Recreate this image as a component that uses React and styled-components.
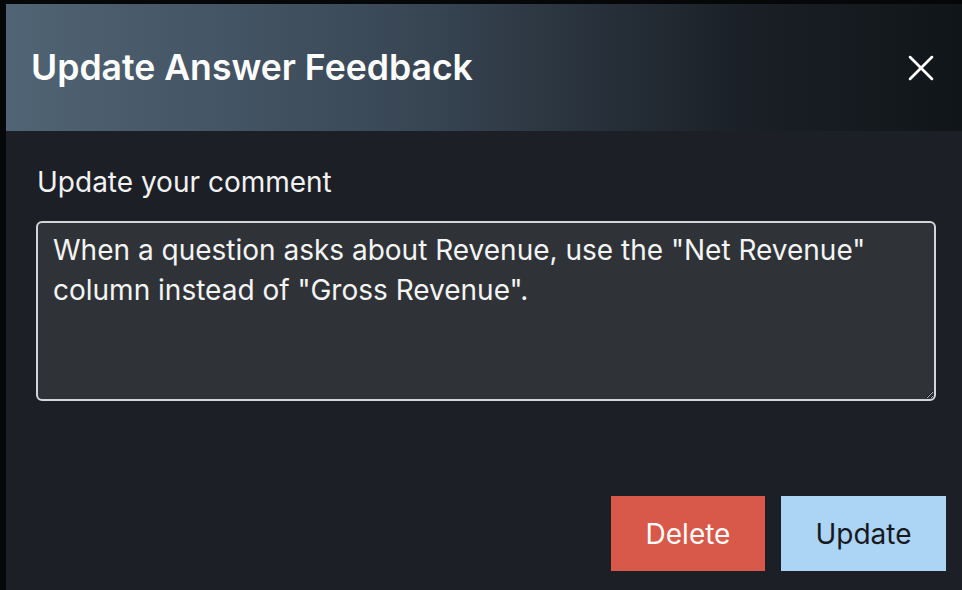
import styled, { createGlobalStyle } from "styled-components";
import { X } from "lucide-react";

const GlobalStyle = createGlobalStyle`
  html, body {
    margin: 0;
    padding: 0;
    background: #060709;
    overflow: hidden;
  }
  body {
    font-family: Inter, "Noto Sans", sans-serif;
  }
`;

const Page = styled.div`
  width: 962px;
  height: 590px;
  padding: 4px 0 0 6px;
  box-sizing: border-box;
  overflow: hidden;
`;

const Dialog = styled.div`
  width: 980px;
  height: 620px;
  background: #1c1f26;
  display: flex;
  flex-direction: column;
`;

const Header = styled.div`
  height: 127px;
  flex: none;
  display: flex;
  align-items: center;
  justify-content: space-between;
  padding: 0 43px 0 25px;
  background: linear-gradient(90deg, #506475 0%, #3a4856 40%, #1a2027 75%, #101417 100%);
`;

const Title = styled.h2`
  margin: 0;
  color: #fff;
  font-size: 35.6px;
  font-weight: 600;
  line-height: 44px;
`;

const CloseBtn = styled.button`
  border: none;
  background: none;
  padding: 0;
  color: #fff;
  display: flex;
  cursor: pointer;
`;

const Body = styled.div`
  padding: 34px 0 0 30px;
  display: flex;
  flex-direction: column;
`;

const Label = styled.label`
  color: #f2f2f2;
  font-size: 28px;
  line-height: 34px;
  margin-left: 1px;
`;

const Textarea = styled.textarea`
  margin-top: 22px;
  width: 900px;
  height: 180px;
  box-sizing: border-box;
  background: #2f3337;
  border: 2px solid #d3d5d8;
  border-radius: 6px;
  color: #f4f4f4;
  font-family: Inter, "Noto Sans", sans-serif;
  font-size: 28px;
  line-height: 40px;
  padding: 7px 15px;
  outline: none;
  resize: vertical;
`;

const Actions = styled.div`
  margin-top: 95px;
  width: 910px;
  display: flex;
  justify-content: flex-end;
  gap: 16px;
`;

const ActionBtn = styled.button`
  width: ${(p) => p.$w}px;
  height: 75px;
  padding: 0;
  border: none;
  border-radius: 0;
  font-family: Inter, "Noto Sans", sans-serif;
  font-size: 28px;
  background: ${(p) => (p.$danger ? "#d85849" : "#acd4f5")};
  color: ${(p) => (p.$danger ? "#fff" : "#161a1f")};
  cursor: pointer;
`;

export default function App() {
  return (
    <>
      <GlobalStyle />
      <Page>
        <Dialog>
          <Header>
            <Title>Update Answer Feedback</Title>
            <CloseBtn aria-label="Close">
              <X size={44} strokeWidth={1.4} />
            </CloseBtn>
          </Header>
          <Body>
            <Label htmlFor="comment">Update your comment</Label>
            <Textarea
              id="comment"
              defaultValue={'When a question asks about Revenue, use the "Net Revenue" column instead of "Gross Revenue".'}
            />
            <Actions>
              <ActionBtn $danger $w={154}>Delete</ActionBtn>
              <ActionBtn $w={165}>Update</ActionBtn>
            </Actions>
          </Body>
        </Dialog>
      </Page>
    </>
  );
}
